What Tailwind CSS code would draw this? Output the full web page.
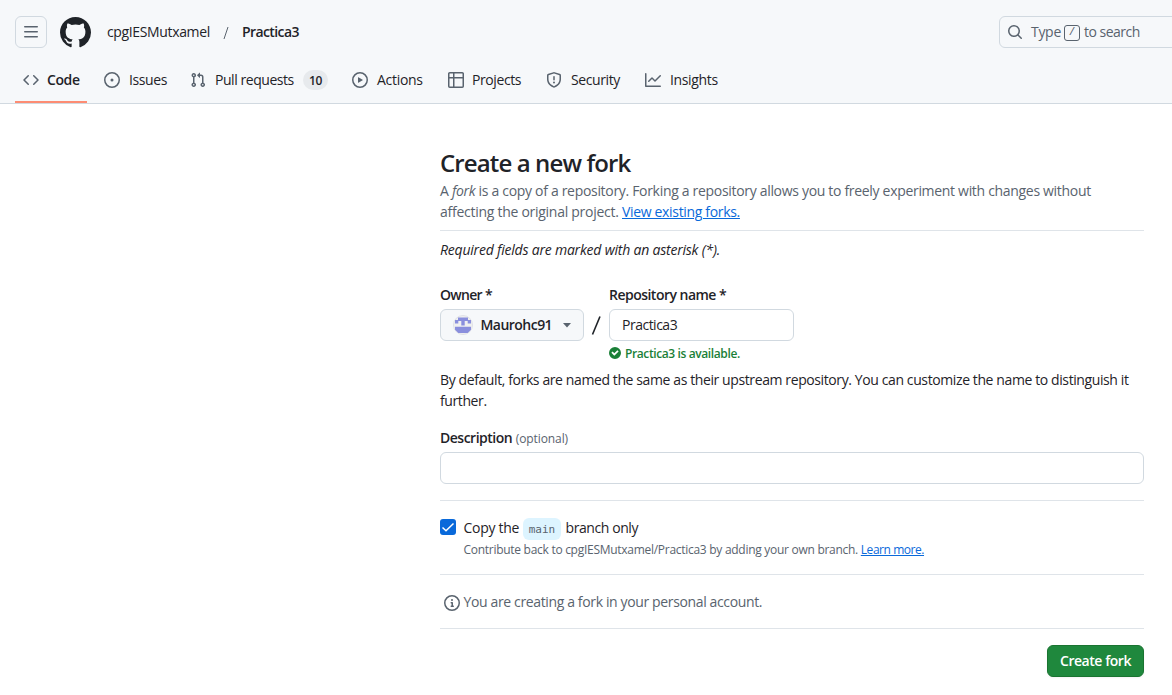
<!DOCTYPE html>
<html lang="en">
<head>
<meta charset="utf-8">
<title>Create a new fork</title>
<script src="https://cdn.jsdelivr.net/npm/@tailwindcss/browser@4"></script>
</head>
<body class="h-[695px] w-[1172px] overflow-hidden bg-white font-['Open_Sans','Noto_Sans',sans-serif] text-[14px] leading-[21px] text-[#1f2328]">
<header class="h-[104px] overflow-hidden border-b border-[#d1d9e0] bg-[#f6f8fa] pt-4">
  <div class="flex h-8 items-center pl-[15px] *:shrink-0">
    <button class="flex size-8 items-center justify-center rounded-md border border-[#d1d9e0] text-[#59636e]">
      <svg class="size-4" viewBox="0 0 16 16" fill="currentColor"><path d="M1 2.75A.75.75 0 0 1 1.75 2h12.5a.75.75 0 0 1 0 1.5H1.75A.75.75 0 0 1 1 2.75Zm0 5A.75.75 0 0 1 1.75 7h12.5a.75.75 0 0 1 0 1.5H1.75A.75.75 0 0 1 1 7.75ZM1.75 12h12.5a.75.75 0 0 1 0 1.5H1.75a.75.75 0 0 1 0-1.5Z"/></svg>
    </button>
    <svg class="ml-[13px] size-[31px]" viewBox="0 0 16 16" fill="currentColor"><path d="M8 0c4.42 0 8 3.58 8 8a8.013 8.013 0 0 1-5.45 7.59c-.4.08-.55-.17-.55-.38 0-.27.01-1.13.01-2.2 0-.75-.25-1.23-.54-1.48 1.78-.2 3.65-.88 3.65-3.95 0-.88-.31-1.59-.82-2.15.08-.2.36-1.02-.08-2.12 0 0-.67-.22-2.2.82-.64-.18-1.32-.27-2-.27-.68 0-1.36.09-2 .27-1.53-1.03-2.2-.82-2.2-.82-.44 1.1-.16 1.92-.08 2.12-.51.56-.82 1.28-.82 2.15 0 3.06 1.86 3.75 3.64 3.95-.23.2-.44.55-.51 1.07-.46.21-1.61.55-2.33-.66-.15-.24-.6-.83-1.23-.82-.67.01-.27.38.01.53.34.19.73.9.82 1.13.16.45.68 1.31 2.69.94 0 .67.01 1.3.01 1.49 0 .21-.15.45-.55.38A7.995 7.995 0 0 1 0 8c0-4.42 3.58-8 8-8Z"/></svg>
    <span class="ml-4 w-[116px] -mt-px whitespace-nowrap tracking-[-0.36px]">cpgIESMutxamel</span>
    <svg class="h-[15px] w-[19px]" viewBox="0 0 19 15" fill="none" stroke="#59636e"><path d="M1 14 5 2"/></svg>
    <span class="-mt-px w-[757px] font-semibold tracking-[-0.6px]">Practica3</span>
    <div class="flex h-8 w-[200px] shrink-0 items-center rounded-md border border-[#d1d9e0] pl-[7px] text-[#59636e]">
      <svg class="size-4 shrink-0" viewBox="0 0 16 16" fill="currentColor"><path d="M10.68 11.74a6 6 0 0 1-7.922-8.982 6 6 0 0 1 8.982 7.922l3.04 3.04a.749.749 0 0 1-.326 1.275.749.749 0 0 1-.734-.215ZM11.5 7a4.499 4.499 0 1 0-8.997 0A4.499 4.499 0 0 0 11.5 7Z"/></svg>
      <span class="ml-2 w-[33px] -mt-px tracking-[-0.3px]">Type</span>
      <kbd class="mt-px flex h-4 w-4 items-center justify-center rounded-[3px] border border-[#59636e] font-['Liberation_Mono',monospace] text-[11px]">/</kbd>
      <span class="-mt-px ml-1 whitespace-nowrap tracking-[-0.5px]">to search</span>
    </div>
  </div>
  <nav class="flex h-[55px] gap-2 pl-[15px] [&_svg]:size-4 [&_svg]:shrink-0 [&_svg]:fill-[#59636e]">
    <a class="mr-px flex h-full w-[72px] shrink-0 items-center gap-2 border-b-2 border-[#fd8c73] pt-4 pb-[5px] pl-2 font-semibold tracking-[-0.4px]"><svg viewBox="0 0 16 16"><path d="m11.28 3.22 4.25 4.25a.75.75 0 0 1 0 1.06l-4.25 4.25a.749.749 0 0 1-1.275-.326.749.749 0 0 1 .215-.734L13.94 8l-3.72-3.72a.749.749 0 0 1 .326-1.275.749.749 0 0 1 .734.215Zm-6.56 0a.751.751 0 0 1 1.042.018.751.751 0 0 1 .018 1.042L2.06 8l3.72 3.72a.749.749 0 0 1-.326 1.275.749.749 0 0 1-.734-.215L.47 8.53a.75.75 0 0 1 0-1.06Z"/></svg><span class="-mt-px">Code</span></a>
    <a class="flex w-[78px] shrink-0 items-center gap-[9px] pt-4 pb-[7px] pl-2 tracking-[-0.4px]"><svg viewBox="0 0 16 16"><path d="M8 9.5a1.5 1.5 0 1 0 0-3 1.5 1.5 0 0 0 0 3Z"/><path d="M8 0a8 8 0 1 1 0 16A8 8 0 0 1 8 0ZM1.5 8a6.5 6.5 0 1 0 13 0 6.5 6.5 0 0 0-13 0Z"/></svg><span class="-mt-px">Issues</span></a>
    <a class="flex w-[154px] shrink-0 items-center pt-4 pb-[7px] pl-2 tracking-[-0.45px]"><svg viewBox="0 0 16 16"><path d="M1.5 3.25a2.25 2.25 0 1 1 3 2.122v5.256a2.251 2.251 0 1 1-1.5 0V5.372A2.25 2.25 0 0 1 1.5 3.25Zm5.677-.177L9.573.677A.25.25 0 0 1 10 .854V2.5h1A2.5 2.5 0 0 1 13.5 5v5.628a2.251 2.251 0 1 1-1.5 0V5a1 1 0 0 0-1-1h-1v1.646a.25.25 0 0 1-.427.177L7.177 3.427a.25.25 0 0 1 0-.354ZM3.75 2.5a.75.75 0 1 0 0 1.5.75.75 0 0 0 0-1.5Zm0 9.5a.75.75 0 1 0 0 1.5.75.75 0 0 0 0-1.5Zm8.25.75a.75.75 0 1 0 1.5 0 .75.75 0 0 0-1.5 0Z"/></svg><span class="-mt-px ml-[9px] w-[88px] whitespace-nowrap">Pull requests</span><span class="flex h-5 w-[25px] items-center justify-center rounded-full bg-[#e7eaed] text-[12px] font-semibold">10</span></a>
    <a class="flex w-[88px] shrink-0 items-center gap-[9px] pt-4 pb-[7px] pl-2 tracking-[-0.3px]"><svg viewBox="0 0 16 16"><path d="M8 0a8 8 0 1 1 0 16A8 8 0 0 1 8 0ZM1.5 8a6.5 6.5 0 1 0 13 0 6.5 6.5 0 0 0-13 0Zm4.879-2.773 4.264 2.559a.25.25 0 0 1 0 .428l-4.264 2.559A.25.25 0 0 1 6 10.559V5.442a.25.25 0 0 1 .379-.215Z"/></svg><span class="-mt-px">Actions</span></a>
    <a class="flex w-[90px] shrink-0 items-center gap-2 pt-4 pb-[7px] pl-2 tracking-[-0.4px]"><svg viewBox="0 0 16 16"><path d="M0 1.75C0 .784.784 0 1.75 0h12.5C15.216 0 16 .784 16 1.75v12.5A1.75 1.75 0 0 1 14.25 16H1.75A1.75 1.75 0 0 1 0 14.25ZM6.5 6.5v8h7.75a.25.25 0 0 0 .25-.25V6.5Zm8-1.5V1.75a.25.25 0 0 0-.25-.25H6.5V5Zm-13 1.5v7.75c0 .138.112.25.25.25H5v-8ZM5 5V1.5H1.75a.25.25 0 0 0-.25.25V5Z"/></svg><span class="-mt-px">Projects</span></a>
    <a class="flex w-[91px] shrink-0 items-center gap-[9px] pt-4 pb-[7px] pl-2 tracking-[-0.4px]"><svg viewBox="0 0 16 16"><path d="M7.467.133a1.748 1.748 0 0 1 1.066 0l5.25 1.68A1.75 1.75 0 0 1 15 3.48V7c0 1.566-.32 3.182-1.303 4.682-.983 1.498-2.585 2.813-5.032 3.855a1.697 1.697 0 0 1-1.33 0c-2.447-1.042-4.049-2.357-5.032-3.855C1.32 10.182 1 8.566 1 7V3.48a1.75 1.75 0 0 1 1.217-1.667Zm.61 1.429a.25.25 0 0 0-.153 0l-5.25 1.68a.25.25 0 0 0-.174.238V7c0 1.358.275 2.666 1.057 3.86.784 1.194 2.121 2.34 4.366 3.297a.196.196 0 0 0 .154 0c2.245-.956 3.582-2.104 4.366-3.298C13.225 9.666 13.5 8.36 13.5 7V3.48a.251.251 0 0 0-.174-.237l-5.25-1.68ZM8.75 4.75v3a.75.75 0 0 1-1.5 0v-3a.75.75 0 0 1 1.5 0ZM9 10.5a1 1 0 1 1-2 0 1 1 0 0 1 2 0Z"/></svg><span class="-mt-px">Security</span></a>
    <a class="flex w-[90px] shrink-0 items-center gap-[9px] pt-4 pb-[7px] pl-2 tracking-[-0.35px]"><svg viewBox="0 0 16 16"><path d="M1.5 1.75V13.5h13.75a.75.75 0 0 1 0 1.5H.75a.75.75 0 0 1-.75-.75V1.75a.75.75 0 0 1 1.5 0Zm14.28 2.53-5.25 5.25a.75.75 0 0 1-1.06 0L7 7.06 4.28 9.78a.751.751 0 0 1-1.042-.018.751.751 0 0 1-.018-1.042l3.25-3.25a.75.75 0 0 1 1.06 0L10 7.94l4.72-4.72a.751.751 0 0 1 1.042.018.751.751 0 0 1 .018 1.042Z"/></svg><span class="-mt-px">Insights</span></a>
  </nav>
</header>
<main class="ml-[440px] w-[704px] pt-[43px]">
  <h1 class="h-[33px] whitespace-nowrap text-[24px] leading-8 font-semibold tracking-[-0.88px]">Create a new fork</h1>
  <div class="h-[51px] whitespace-nowrap border-b border-[#d1d9e0]/70 text-[#59636e]">
    <p><span class="tracking-[-0.312px]">A <em>fork</em> is a copy of a repository. Forking a repository allows you to freely experiment with changes without</span><br><span class="tracking-[-0.27px]">affecting the original project. </span><a class="tracking-[-0.33px] text-[#0969da] underline">View existing forks.</a></p>
  </div>
  <p class="mt-2 whitespace-nowrap italic tracking-[-0.21px]">Required fields are marked with an asterisk (*).</p>
  <div class="mt-6 flex">
    <div class="w-[144px]">
      <p class="font-semibold tracking-[-0.7px]">Owner *</p>
      <button class="mt-1 flex h-8 w-full items-center rounded-md border border-[#d1d9e0] bg-[#f6f8fa] pl-3 font-semibold">
        <svg class="size-5 shrink-0" viewBox="0 0 20 20"><circle cx="10" cy="10" r="9.500" fill="#f0f0f0" stroke="#dfe1e6"/><path fill="#8a8fdd" d="M5 2.500h10V5h3v3.500h-3.300V6h-3v4.500H8.300V6h-3v2.500H2V5h3zM2 11.700h16v3L14.700 18H5.300L2 14.700z"/></svg>
        <span class="-mt-px ml-[7.500px] w-[82.500px] text-left tracking-[-0.53px]">Maurohc91</span>
        <svg class="h-[5px] w-2" viewBox="0 0 8 5" fill="#59636e"><path d="M0 0h8L4 4.500z"/></svg>
      </button>
    </div>
    <svg class="mt-8 h-5 w-[25px]" viewBox="0 0 25 20" fill="none" stroke="#1f2328" stroke-width="1.600"><path d="M8.500 18.500 16 .500"/></svg>
    <div class="w-[185px]">
      <p class="whitespace-nowrap font-semibold tracking-[-0.52px]">Repository name *</p>
      <div class="mt-1 flex h-8 items-center rounded-md border border-[#d1d9e0] pb-px pl-3 tracking-[-0.5px]">Practica3</div>
      <p class="mt-1 flex h-[18px] items-center gap-1 whitespace-nowrap text-[12px] leading-[18px] font-semibold text-[#1a7f37]"><svg class="-mt-[2px] size-3" viewBox="0 0 12 12" fill="currentColor"><path d="M6 0a6 6 0 1 1 0 12A6 6 0 0 1 6 0Zm-.705 8.737L9.630 4.403 8.392 3.166 5.295 6.263l-1.700-1.702L2.356 5.800l2.938 2.938Z"/></svg><span class="tracking-[-0.39px]">Practica3 is available.</span></p>
    </div>
  </div>
  <p class="mt-[6px] whitespace-nowrap"><span class="tracking-[-0.395px]">By default, forks are named the same as their upstream repository. You can customize the name to distinguish it</span><br><span class="tracking-[-0.4px]">further.</span></p>
  <p class="mt-4 font-semibold"><span class="tracking-[-0.5px]">Description</span> <span class="text-[12px] font-medium tracking-[-0.1px] text-[#59636e]">(optional)</span></p>
  <div class="mt-[3px] h-8 rounded-md border border-[#d1d9e0]"></div>
  <div class="mt-4 flex h-[75px] border-y border-[#d1d9e0]/70 pt-[17px]">
    <svg class="mt-px size-4" viewBox="0 0 16 16"><rect width="16" height="16" rx="3" fill="#0969da"/><path d="m2.500 8.500 3.500 3.200L13.500 4.500" fill="none" stroke="#fff" stroke-width="1.500"/></svg>
    <div class="ml-[7.500px] whitespace-nowrap">
      <p class="flex h-[22px] items-center"><span class="-mt-[3px] w-[59.500px] tracking-[-0.28px]">Copy the</span><code class="flex h-[22px] w-[38px] items-center justify-center rounded-md bg-[#ddf4ff] font-['DejaVu_Sans_Mono',monospace] text-[11px] text-[#59636e]">main</code><span class="-mt-[3px] ml-[4.500px] tracking-[-0.42px]">branch only</span></p>
      <p class="mt-px text-[12px] leading-[18px] text-[#59636e]"><span class="tracking-[-0.28px]">Contribute back to cpgIESMutxamel/Practica3 by adding your own branch. </span><a class="tracking-[-0.45px] text-[#0969da] underline">Learn more.</a></p>
    </div>
  </div>
  <div class="flex h-[54px] items-center whitespace-nowrap border-b border-[#d1d9e0]/70 pl-1 text-[#59636e]">
    <svg class="mt-[3px] mr-[3.500px] size-4" viewBox="0 0 16 16" fill="currentColor"><path d="M0 8a8 8 0 1 1 16 0A8 8 0 0 1 0 8Zm8-6.500a6.500 6.500 0 1 0 0 13 6.500 6.500 0 0 0 0-13ZM6.500 7.750A.75.75 0 0 1 7.250 7h1a.75.75 0 0 1 .75.75v2.750h.25a.75.75 0 0 1 0 1.500h-2a.75.75 0 0 1 0-1.500h.25v-2h-.25a.75.75 0 0 1-.75-.75ZM8 6a1 1 0 1 1 0-2 1 1 0 0 1 0 2Z"/></svg>
    <span class="tracking-[-0.365px]">You are creating a fork in your personal account.</span>
  </div>
  <button class="mt-4 ml-auto flex h-8 w-[97px] items-center justify-center whitespace-nowrap rounded-md border border-[#1a7431] bg-[#1f883d] pb-px font-semibold tracking-[-0.45px] text-white shadow-xs">Create fork</button>
</main>
</body>
</html>
